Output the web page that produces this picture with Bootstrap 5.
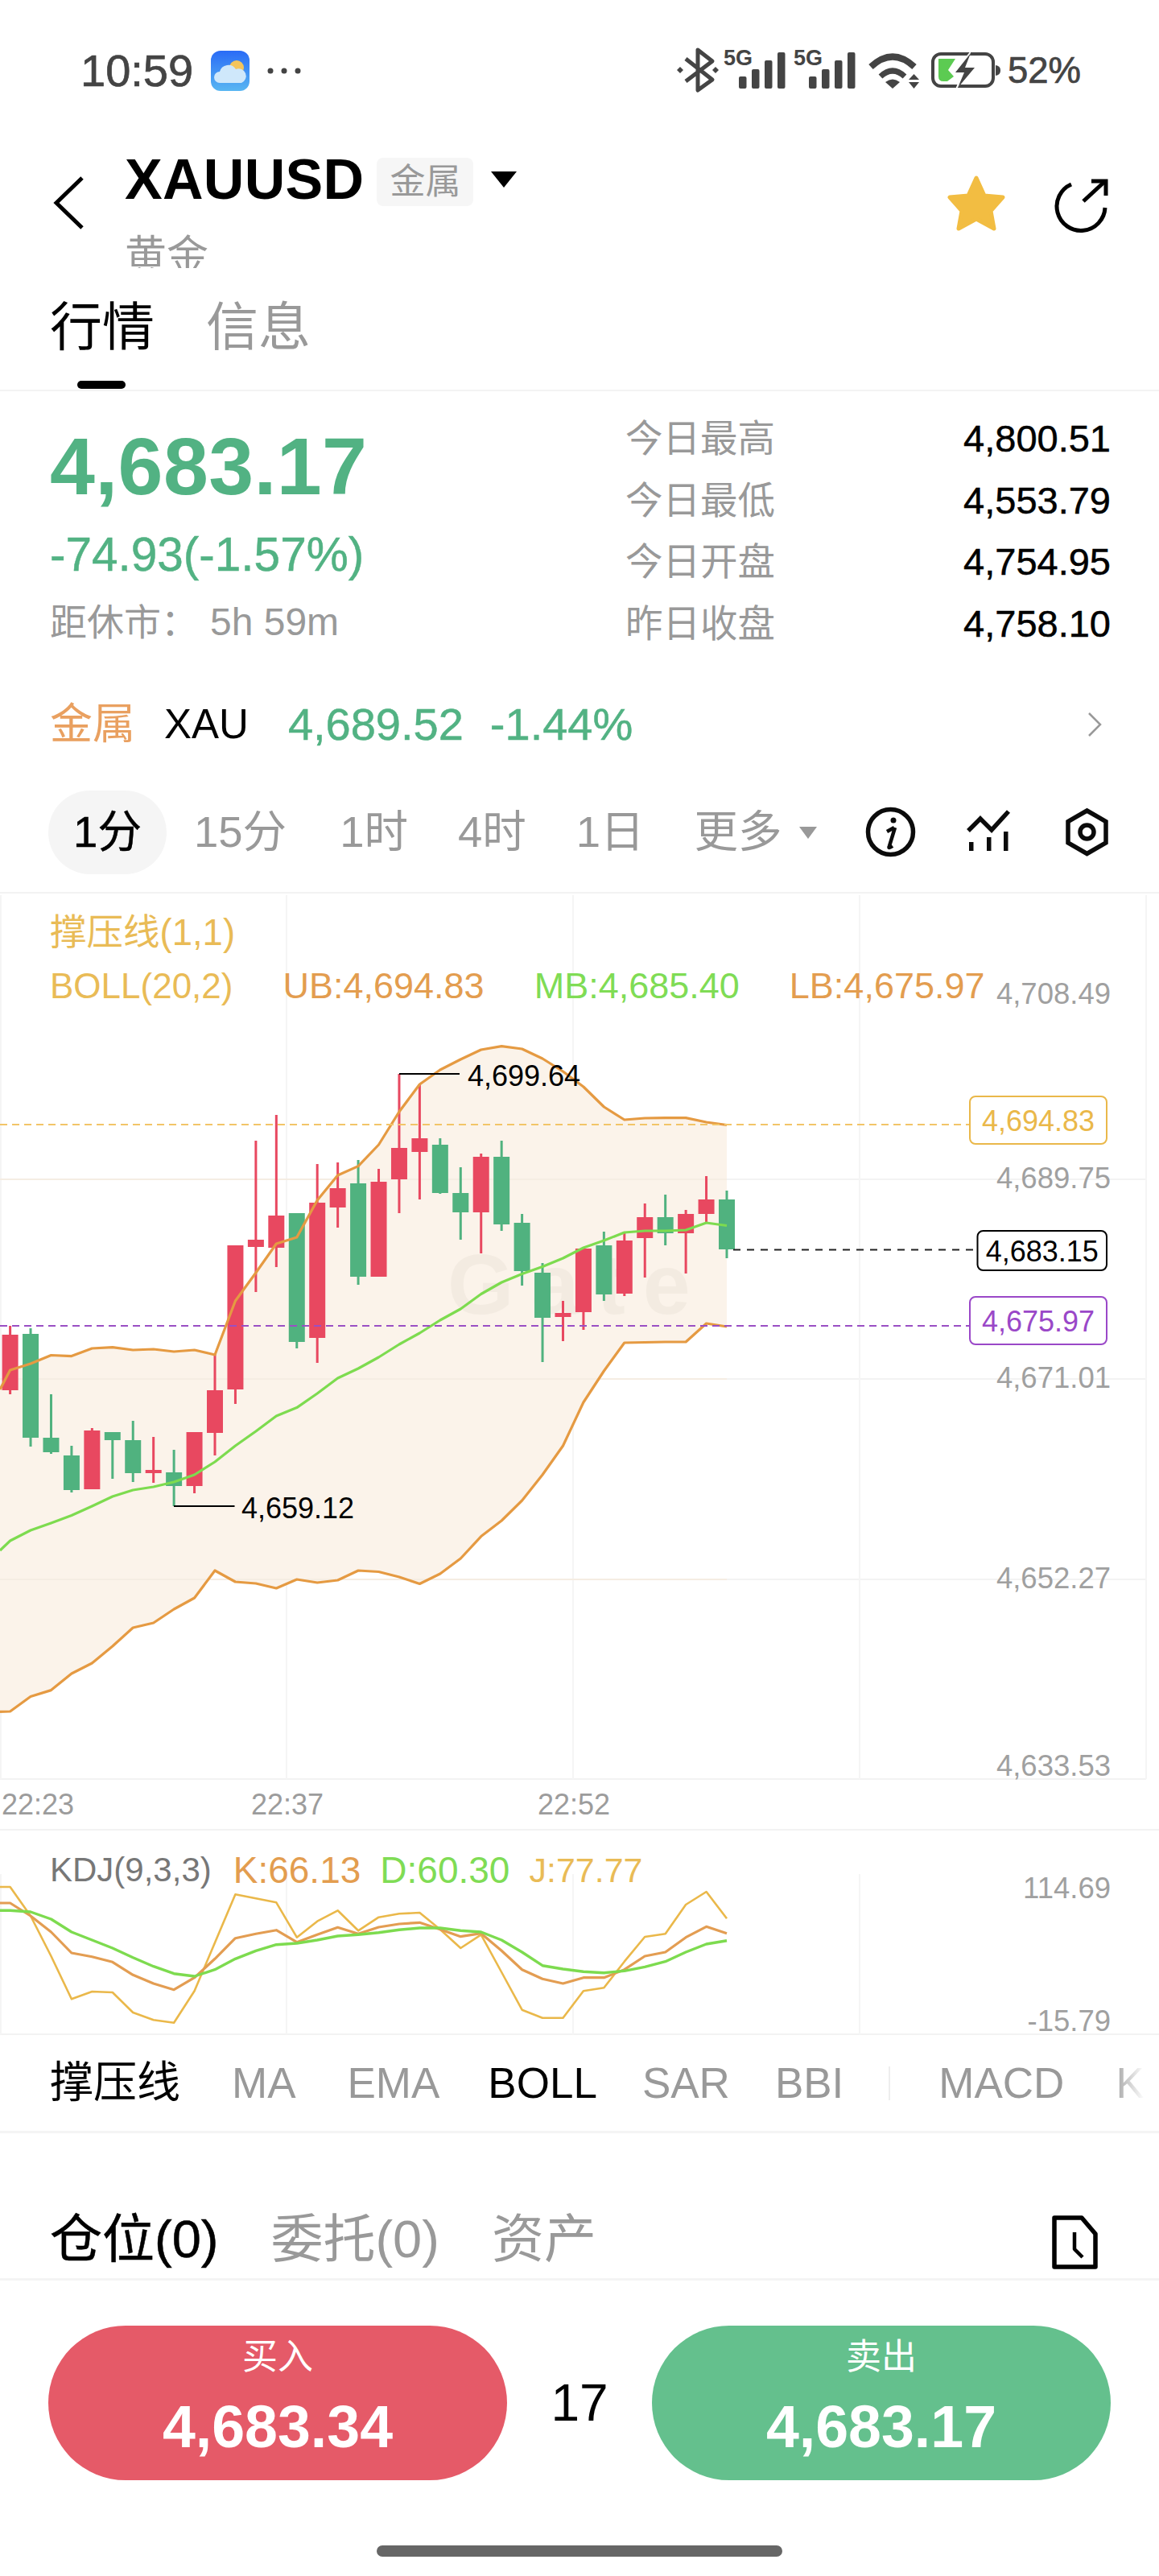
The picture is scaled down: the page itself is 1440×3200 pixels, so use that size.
<!doctype html>
<html lang="zh"><head><meta charset="utf-8"><title>XAUUSD</title>
<link rel="stylesheet" href="https://cdn.jsdelivr.net/npm/bootstrap@5.3.0/dist/css/bootstrap.min.css">
<style>
body{margin:0;background:#fff;font-family:"Liberation Sans","Noto Sans CJK SC",sans-serif;color:#000}
.phone{width:1440px;height:3200px;overflow:hidden;background:#fff}
.muted{color:#999}.up{color:#52b283}
.med{-webkit-text-stroke:.5px currentColor}
.sbar{height:176px;padding:0 97px 0 100px;color:#444}
.sbar-time{font-size:56px;line-height:60px;margin-right:22px;-webkit-text-stroke:.7px currentColor}
.sbar-pct{font-size:45.500px;line-height:60px;margin-left:7px;-webkit-text-stroke:.7px currentColor}
.hdr{height:157px;overflow:hidden;padding:0 60px 0 66px}
.hdr-back{margin-top:42px;margin-right:49px}
.hdr-title{margin-top:11px}
.sym{font-size:70px;line-height:72px;font-weight:700;letter-spacing:.3px}
.tag-chip{width:120px;height:60px;margin:6px 0 0 16px;background:#f6f6f6;border-radius:8px;font-size:44px;line-height:60px;color:#999;text-align:center}
.tri{width:0;height:0;margin:0 0 0 22px;border-left:16px solid transparent;border-right:16px solid transparent;border-top:20px solid #000}
.subname{font-size:52px;line-height:60px;margin-top:29px;color:#999}
.hdr-tools{margin-top:40px}
.tabs{height:153px;padding:34px 0 0 62px;border-bottom:2px solid #f3f3f3}
.tabs-row{font-size:65px;line-height:80px;gap:64px}
.tab-bar{width:60px;height:10px;margin:26px 0 0 34px;background:#000;border-radius:5px}
.quote{height:364px;padding:0 60px 0 62px}
.px{font-size:100.500px;line-height:100px;margin-top:43px;font-weight:700;letter-spacing:.4px}
.chg{font-size:58.500px;line-height:60px;margin-top:30px}
.ttc{font-size:46px;line-height:56px;margin-top:26px;color:#999}
.ttc span{margin-left:15px;font-size:48px}
.stats{width:603px;margin-top:21px}
.stat-row{height:76.5px;line-height:76.5px;font-size:46.500px}
.stat-row b{font-weight:400;font-size:47px}
.mrow{height:94px;padding:6px 70px 0 62px}
.mrow-cn{font-size:53px;color:#e9a060;margin-right:36px}
.mrow-sym{font-size:51px;margin-right:49px}
.mrow-val{font-size:56px;margin-right:33px}
.prow{height:166px;padding:39px 60px 23px 60px;border-bottom:2px solid #f3f3f3;font-size:54.500px;color:#999}
.pill{width:147px;height:104px;background:#f5f5f5;border-radius:52px;color:#000;text-align:center;line-height:104px;margin-right:34px}
.prow-item{margin-right:62px}
.prow-first{margin-right:66px}
.tri-sm{width:0;height:0;margin-left:-41px;border-left:11px solid transparent;border-right:11px solid transparent;border-top:15px solid #999}
.chart{height:1164px;border-bottom:2px solid #f3f3f3}
.chart-svg{left:0;top:0}
.leg{font-size:45px;line-height:60px;padding-left:62px}
.leg1{padding-top:19px;color:#e9bb56;font-size:45.500px}
.leg2{margin-top:6px;gap:62px}
.boll-name{color:#e9bb56;font-size:44px}
.c-or{color:#e39d4f}.c-gr{color:#7fdc55}.c-ye{color:#e9bb56}
.ax{font-size:36.500px;fill:#a0a0a0}
.kd{height:254px;border-bottom:2px solid #f3f3f3}
.kd-leg{padding:24px 0 0 62px;font-size:46px;line-height:50px;gap:24px}
.kd-name{color:#777;font-size:42px;margin-right:3px}
.kd-j{font-size:43px}
.irow{height:122px;padding:0 0 0 62px;border-bottom:3px solid #f4f4f4;font-size:53px;color:#999;gap:56px;white-space:nowrap;overflow:hidden}
.irow-cn{font-size:54px;color:#000}
.irow-on{color:#000}
.irow-div{width:2px;height:42px;background:#eee;flex:none}
.irow-fade{right:0;top:0;width:60px;height:100%;background:linear-gradient(90deg,rgba(255,255,255,0),#fff 70%)}
.ptabs{height:183px;padding:92px 75px 0 62px;border-bottom:3px solid #f4f4f4;font-size:65px;line-height:80px}
.ptabs-l{gap:65px}
.ptabs-ic{margin-top:8px}
.trade{padding:56px 60px 0 60px}
.act{width:570px;height:192px;border:0;border-radius:96px;color:#fff;padding:0}
.act-buy,.act-buy:hover{background:#e55a68;color:#fff}
.act-sell,.act-sell:hover{background:#64c08d;color:#fff}
.act-l{font-size:44px;line-height:50px;padding-top:14px}
.act-p{font-size:73.500px;line-height:80px;margin-top:22px;font-weight:700}
.lot{font-size:64px;line-height:70px}
.home{width:504px;height:14px;margin:81px auto 0;background:#666;border-radius:7px}
</style></head>
<body>
<div class="phone">
  <div class="sbar d-flex align-items-center">
    <span class="sbar-time">10:59</span>
    <svg width="116" height="54" viewBox="262 61 116 54" aria-hidden="true">
      <defs><linearGradient id="wx" x1="0" y1="0" x2="0" y2="1"><stop offset="0" stop-color="#2a6bf6"/><stop offset="1" stop-color="#58b6f2"/></linearGradient></defs>
      <rect x="262" y="63" width="48" height="50" rx="12" fill="url(#wx)"/>
      <circle cx="294" cy="84" r="9" fill="#f4c55c"/>
      <path d="M273 103a7 7 0 0 1 0-14 11 11 0 0 1 20-3 9 9 0 0 1 7 17z" fill="#cfe8fb"/>
      <circle cx="336" cy="88" r="3.5" fill="#444"/><circle cx="353" cy="88" r="3.5" fill="#444"/><circle cx="370" cy="88" r="3.5" fill="#444"/>
    </svg>
    <svg class="ms-auto" width="405" height="60" viewBox="840 58 405 60" aria-hidden="true" fill="#444">
      <path d="M852 73 885 99 867 112V62L885 76 852 101" fill="none" stroke="#444" stroke-width="5" stroke-linejoin="round"/>
      <path d="M845 83l4 4-4 4-4-4zM889 83l4 4-4 4-4-4z"/>
      <text x="899" y="81" font-size="27" font-weight="700" font-family="Liberation Sans">5G</text>
      <rect x="918" y="95" width="9.5" height="15" rx="2"/><rect x="934" y="86" width="9.5" height="24" rx="2"/><rect x="950" y="75" width="9.5" height="35" rx="2"/><rect x="966" y="65" width="9.5" height="45" rx="2"/>
      <text x="986" y="81" font-size="27" font-weight="700" font-family="Liberation Sans">5G</text>
      <rect x="1005" y="95" width="9.5" height="15" rx="2"/><rect x="1021" y="86" width="9.5" height="24" rx="2"/><rect x="1037" y="75" width="9.5" height="35" rx="2"/><rect x="1053" y="65" width="9.5" height="45" rx="2"/>
      <path d="M1082 83Q1109 58 1136 83" fill="none" stroke="#444" stroke-width="8"/>
      <path d="M1094 95Q1109 81 1124 95" fill="none" stroke="#444" stroke-width="7"/>
      <path d="M1100 102Q1109 95 1118 102L1109 110z"/>
      <path d="M1129 99l6.500-7 6.500 7zM1129 102l6.500 8 6.500-8z"/>
      <rect x="1159" y="67" width="75" height="40" rx="10" fill="none" stroke="#444" stroke-width="4"/>
      <path d="M1237 81q6 1 6 6v1q0 5-6 6z"/>
      <path d="M1166 73H1187L1178 87 1185 95 1177 101H1172Q1166 101 1166 95z" fill="#5ccb52"/>
      <path d="M1207 62 1183 92H1195L1186 113 1214 82H1201z" fill="#fff"/>
      <path d="M1206 66 1187 90H1198L1190 109 1211 84H1199z"/>
    </svg>
    <span class="sbar-pct">52%</span>
  </div>

  <div class="hdr d-flex align-items-start">
    <svg class="hdr-back flex-none" width="40" height="68" viewBox="65 218 40 68" aria-hidden="true"><path d="M101 221 69 252 101 283" fill="none" stroke="#000" stroke-width="5"/></svg>
    <div class="hdr-title">
      <div class="d-flex align-items-center"><span class="sym">XAUUSD</span><span class="tag-chip">金属</span><span class="tri"></span></div>
      <div class="subname">黄金</div>
    </div>
    <svg class="hdr-tools ms-auto" width="205" height="74" viewBox="1175 216 205 74" aria-hidden="true">
      <path d="M1213 221 1223 243 1246 245 1231 262 1235 284 1213 272 1191 284 1195 262 1180 245 1203 243z" fill="#f2bd42" stroke="#f2bd42" stroke-width="5" stroke-linejoin="round"/>
      <g fill="none" stroke="#000" stroke-width="5"><path d="M1331 229A30 30 0 1 0 1373 258"/><path d="M1346 250 1372 226"/><path d="M1356 225H1374V243"/></g>
    </svg>
  </div>

  <div class="tabs">
    <div class="tabs-row d-flex"><span>行情</span><span class="muted">信息</span></div>
    <div class="tab-bar"></div>
  </div>

  <div class="quote d-flex justify-content-between align-items-start">
    <div>
      <div class="px up">4,683.17</div>
      <div class="chg up med">-74.93(-1.57%)</div>
      <div class="ttc">距休市：<span>5h 59m</span></div>
    </div>
    <div class="stats">
      <div class="stat-row d-flex justify-content-between"><span class="muted">今日最高</span><b class="med">4,800.51</b></div>
      <div class="stat-row d-flex justify-content-between"><span class="muted">今日最低</span><b class="med">4,553.79</b></div>
      <div class="stat-row d-flex justify-content-between"><span class="muted">今日开盘</span><b class="med">4,754.95</b></div>
      <div class="stat-row d-flex justify-content-between"><span class="muted">昨日收盘</span><b class="med">4,758.10</b></div>
    </div>
  </div>

  <div class="mrow d-flex align-items-center">
    <span class="mrow-cn">金属</span><span class="mrow-sym">XAU</span><span class="mrow-val up med">4,689.52</span><span class="mrow-val up med">-1.44%</span>
    <svg class="ms-auto" width="20" height="32" viewBox="0 0 20 32" aria-hidden="true"><path d="M3 2 17 16 3 30" fill="none" stroke="#999" stroke-width="2.500"/></svg>
  </div>

  <div class="prow d-flex align-items-center">
    <span class="pill med">1分</span>
    <span class="prow-first">15分</span><span class="prow-item">1时</span><span class="prow-item">4时</span><span class="prow-item">1日</span><span class="prow-item">更多</span>
    <span class="tri-sm"></span>
    <svg class="ms-auto" width="310" height="70" viewBox="1070 1000 310 70" aria-hidden="true">
      <g fill="none" stroke="#0b0b0b" stroke-width="5.500">
        <circle cx="1106.500" cy="1034.500" r="28"/>
        <path d="M1112 1029 1105 1052Q1103 1056 1109 1052M1102 1034 1111 1029" stroke-width="4.500"/>
        <path d="M1203 1033 1218 1018 1232 1032 1253 1009"/>
        <circle cx="1350.500" cy="1034.500" r="8.500"/>
        <path d="M1350.500 1008 1374 1021.500V1048L1350.500 1061.500 1327 1048V1021.500z"/>
      </g>
      <circle cx="1110" cy="1020" r="3.500" fill="#0b0b0b"/>
      <rect x="1204" y="1047" width="5.500" height="11" fill="#0b0b0b"/><rect x="1226" y="1041" width="5.500" height="17" fill="#0b0b0b"/><rect x="1247" y="1034" width="5.500" height="24" fill="#0b0b0b"/>
    </svg>
  </div>

  <div class="chart position-relative">
    <svg id="main" class="chart-svg position-absolute" width="1440" height="1164" viewBox="0 1110 1440 1164"></svg>
    <div class="position-relative">
      <div class="leg leg1">撑压线(1,1)</div>
      <div class="leg leg2 d-flex"><span class="boll-name">BOLL(20,2)</span><span class="c-or">UB:4,694.83</span><span class="c-gr">MB:4,685.40</span><span class="c-or">LB:4,675.97</span></div>
    </div>
  </div>

  <div class="kd position-relative">
    <svg id="kdj" class="chart-svg position-absolute" width="1440" height="254" viewBox="0 2274 1440 254"></svg>
    <div class="kd-leg position-relative d-flex"><span class="kd-name">KDJ(9,3,3)</span><span class="c-or">K:66.13</span><span class="c-gr">D:60.30</span><span class="c-ye kd-j">J:77.77</span></div>
  </div>

  <div class="irow d-flex align-items-center position-relative">
    <span class="irow-cn me-2">撑压线</span><span class="me-2">MA</span><span class="me-1">EMA</span><span class="irow-on">BOLL</span><span>SAR</span><span>BBI</span><span class="irow-div me-1"></span><span class="me-2">MACD</span><span>KDJ</span>
    <span class="irow-fade position-absolute"></span>
  </div>

  <div class="ptabs d-flex justify-content-between">
    <div class="ptabs-l d-flex"><span class="med">仓位(0)</span><span class="muted">委托(0)</span><span class="muted">资产</span></div>
    <svg class="ptabs-ic" width="60" height="72" viewBox="1306 2750 60 72" aria-hidden="true"><g fill="none" stroke="#000" stroke-width="5.500" stroke-linejoin="round"><path d="M1311 2755H1345L1362 2775V2816H1311z"/><path d="M1336 2773V2794L1346 2804" stroke-width="4.500"/></g></svg>
  </div>

  <div class="trade">
    <div class="d-flex justify-content-between align-items-center">
      <button type="button" class="btn act act-buy d-flex flex-column align-items-center justify-content-start"><div class="act-l">买入</div><div class="act-p">4,683.34</div></button>
      <span class="lot">17</span>
      <button type="button" class="btn act act-sell d-flex flex-column align-items-center justify-content-start"><div class="act-l">卖出</div><div class="act-p">4,683.17</div></button>
    </div>
    <div class="home"></div>
  </div>
</div>
<script>
(function(){
var X=function(i){return 12.6+25.44*i};
// colour, wick top, body top, body bottom, wick bottom
var C=[["r",1647,1658,1727,1732],["g",1650,1657,1786,1797],["g",1732,1786,1804,1806],["g",1796,1808,1851,1854],["r",1774,1777,1850,1850],["g",1779,1779,1789,1837],["g",1765,1789,1830,1841],["r",1785,1826,1830,1842],["g",1801,1829,1846,1871],["r",1779,1779,1846,1855],["r",1682,1727,1780,1808],["r",1547,1547,1726,1744],["r",1417,1540,1549,1605],["r",1385,1510,1550,1574],["g",1507,1507,1667,1675],["r",1446,1494,1662,1693],["r",1444,1476,1500,1525],["g",1441,1470,1586,1596],["r",1452,1468,1586,1586],["r",1334,1426,1465,1507],["r",1347,1414,1431,1490],["g",1414,1422,1482,1483],["g",1450,1482,1506,1540],["r",1433,1437,1506,1557],["g",1417,1437,1521,1529],["g",1508,1519,1579,1597],["g",1569,1581,1637,1692],["r",1616,1631,1636,1666],["r",1551,1551,1630,1652],["g",1530,1547,1608,1616],["r",1532,1541,1607,1610],["r",1495,1512,1538,1587],["g",1484,1512,1532,1547],["r",1503,1508,1532,1582],["r",1461,1490,1508,1518],["g",1479,1490,1552,1563]];
var UB=[1726,1702,1694,1683.5,1684.6,1675,1673.6,1677,1676,1679,1677,1683,1616,1581,1545,1537,1491,1460,1448.6,1422,1381,1347,1329,1316,1304,1299.6,1303,1315,1331,1350,1375,1391,1389,1388.6,1388.6,1394,1397.5];
var LB=[2126.4,2126,2107.5,2099.6,2079,2066,2045,2022,2016,1999,1985,1951,1965,1967,1973,1962,1966,1963,1951,1952.5,1959,1967.5,1955,1936,1908.6,1889,1864,1832,1796,1742,1703,1668,1667.5,1667,1667,1644,1648];
var MB=[1926,1914,1901,1892,1882.5,1871,1859,1851,1847,1841,1832,1816,1796,1778,1759,1748.6,1731,1712,1700,1686,1670,1656,1640,1626,1607.5,1593,1582.5,1573.6,1563,1550,1541,1531,1529,1529,1528,1519,1522.5];
function pts(a){return a.map(function(y,k){return (k==0?0:X(k-1)).toFixed(1)+","+y}).join(" ")}
function line(p,c,w){return '<polyline points="'+p+'" fill="none" stroke="'+c+'" stroke-width="'+w+'" stroke-linejoin="round"/>'}
var s='';
[1465,1713,1962,2210].forEach(function(y){s+='<line x1="0" x2="1424" y1="'+y+'" y2="'+y+'" stroke="#f3f3f3" stroke-width="2"/>'});
[1,356,712,1068,1424].forEach(function(x){s+='<line x1="'+x+'" x2="'+x+'" y1="1112" y2="2210" stroke="#f5f5f5" stroke-width="2"/>'});
var rev=LB.map(function(y,k){return (k==0?0:X(k-1)).toFixed(1)+","+y}).reverse().join(" ");
s+='<polygon points="'+pts(UB)+' '+rev+'" fill="#fbf3ea"/>';
[1465,1713,1962].forEach(function(y){s+='<line x1="0" x2="903" y1="'+y+'" y2="'+y+'" stroke="#f5ede3" stroke-width="2"/>'});
s+='<text x="556" y="1632" font-size="106" font-weight="700" letter-spacing="22" fill="#f3ebe1" font-family="Liberation Sans">Gate</text>';
C.forEach(function(c,i){var x=X(i),col=c[0]=="r"?"#e84860":"#50b27f";
 s+='<rect x="'+(x-1.5)+'" y="'+c[1]+'" width="3" height="'+(c[4]-c[1])+'" fill="'+col+'"/>';
 s+='<rect x="'+(x-10)+'" y="'+c[2]+'" width="20" height="'+Math.max(c[3]-c[2],2)+'" fill="'+col+'"/>';});
s+=line(pts(UB),"#e59a42",3.2)+line(pts(LB),"#e59a42",3.2)+line(pts(MB),"#7ddb4f",3.2);
s+='<line x1="0" x2="1204" y1="1397" y2="1397" stroke="#f2c568" stroke-width="2" stroke-dasharray="9 6"/>';
s+='<line x1="0" x2="1204" y1="1647" y2="1647" stroke="#9a4fc4" stroke-width="2" stroke-dasharray="9 6"/>';
s+='<line x1="911" x2="1213" y1="1552.500" y2="1552.500" stroke="#222" stroke-width="2" stroke-dasharray="9 8"/>';
s+='<path d="M496 1334H571M216 1871H291.500" stroke="#000" stroke-width="2" fill="none"/>';
s+='<text x="581" y="1349" font-size="36" fill="#000">4,699.64</text><text x="300" y="1886" font-size="36" fill="#000">4,659.12</text>';
[["4,708.49",1234],["4,689.75",1463],["4,671.01",1711],["4,652.27",1960],["4,633.53",2193]].forEach(function(a){s+='<text class="ax" x="1380" y="'+(a[1]+13)+'" text-anchor="end">'+a[0]+'</text>'});
function tag(x,y,w,h,c,t){return '<rect x="'+x+'" y="'+y+'" width="'+w+'" height="'+h+'" rx="7" fill="#fff" stroke="'+c+'" stroke-width="2"/><text x="'+(x+w/2)+'" y="'+(y+h/2+13)+'" text-anchor="middle" font-size="36" fill="'+c+'">'+t+'</text>'}
s+=tag(1205,1362,170,59,"#eab84a","4,694.83")+tag(1214.500,1529,160.500,49,"#000","4,683.15")+tag(1205,1611,170,59,"#9a48c8","4,675.97");
[["22:23",2],["22:37",312],["22:52",668]].forEach(function(a){s+='<text x="'+a[1]+'" y="2254" font-size="36" fill="#9c9c9c">'+a[0]+'</text>'});
var m=document.getElementById("main");m.innerHTML=s;m.style.fontFamily='"Liberation Sans",sans-serif';

var J=[312,420,570,730,702,705,780,808,818,700,520,340,355,370,500,440,400,475,425,412,408,470,540,490,630,770,800,800,700,688,590,498,487,378,330,430];
var K=[372,420,480,558,572,592,640,672,695,650,580,503,487,473,518,490,463,487,462,450,445,470,497,485,550,620,655,672,650,650,620,570,555,500,460,485];
var D=[400,405,432,480,510,540,575,608,635,645,620,580,550,527,522,510,495,490,482,472,465,465,475,480,510,555,605,618,628,632,625,610,590,555,525,512];
function kp(a){var r=["0,"+(2240+a[0]/3).toFixed(1)];return r.concat(a.map(function(v,i){return X(i).toFixed(1)+","+(2240+v/3).toFixed(1)})).join(" ")}
var t='';
[1,356,712,1068].forEach(function(x){t+='<line x1="'+x+'" x2="'+x+'" y1="2328" y2="2527" stroke="#f5f5f5" stroke-width="2"/>'});
t+=line(kp(J),"#eab84a",2.6)+line(kp(K),"#e39d52",3.2)+line(kp(D),"#7ddb4f",3.4);
t+='<text class="ax" x="1380" y="2358" text-anchor="end">114.69</text><text class="ax" x="1380" y="2523" text-anchor="end">-15.79</text>';
var q=document.getElementById("kdj");q.innerHTML=t;q.style.fontFamily='"Liberation Sans",sans-serif';
})();
</script>
<script src="https://cdn.jsdelivr.net/npm/bootstrap@5.3.0/dist/js/bootstrap.bundle.min.js"></script>
</body></html>
